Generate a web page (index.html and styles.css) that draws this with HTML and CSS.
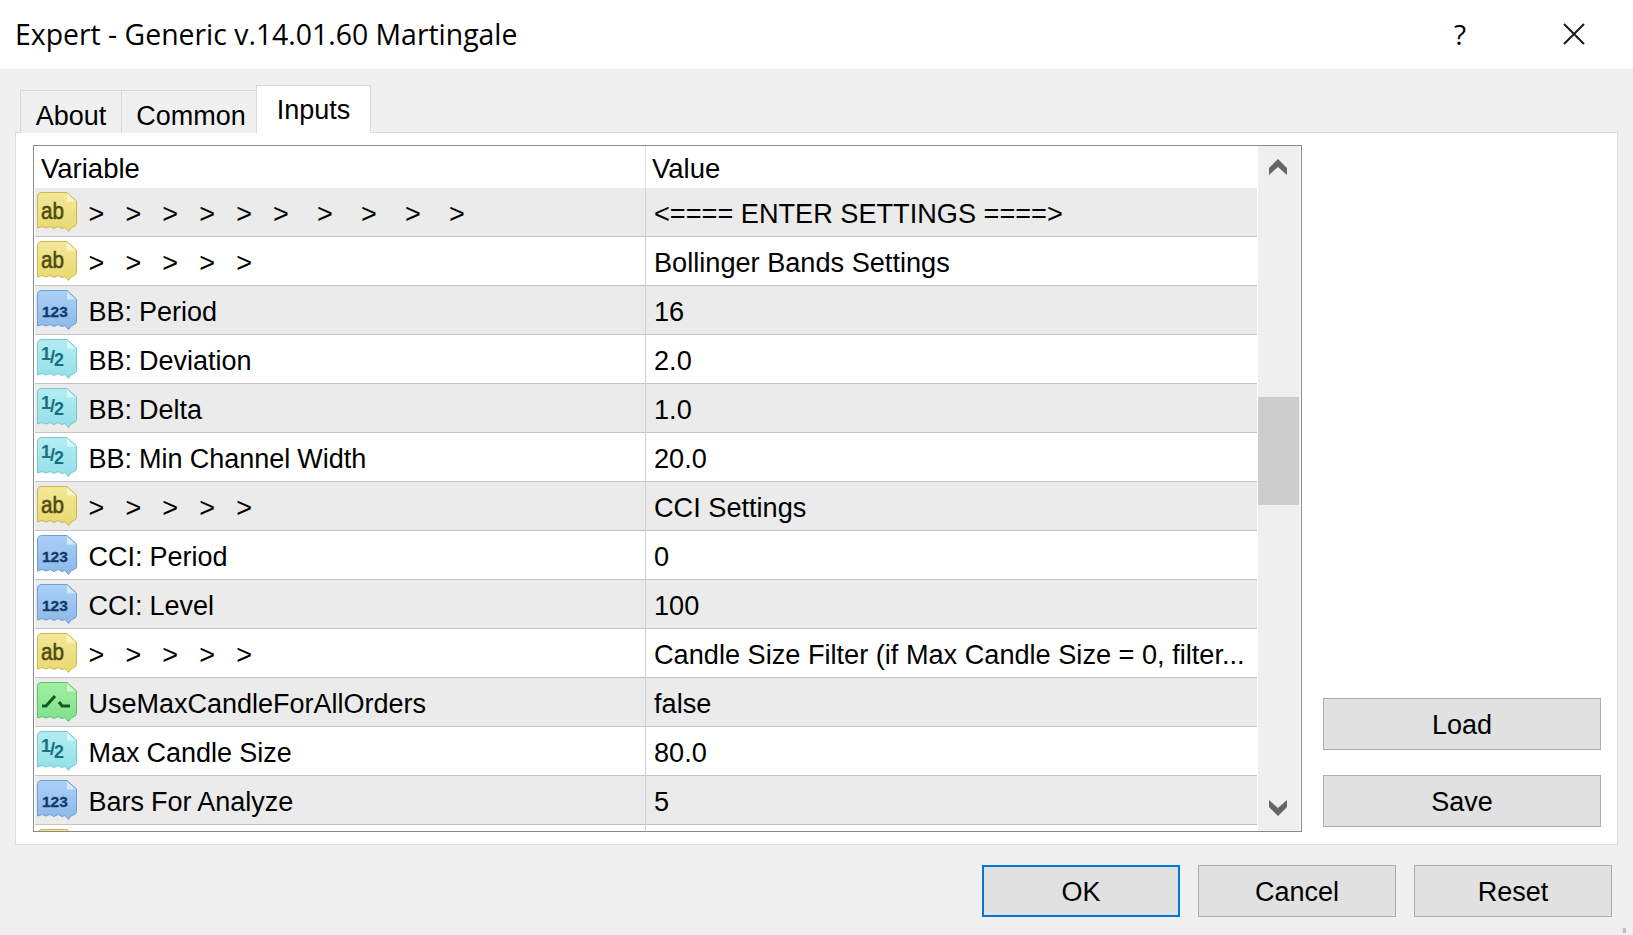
FILE: index.html
```html
<!DOCTYPE html>
<html lang="en">
<head>
	<meta charset="UTF-8">
	<title>Expert - Generic v.14.01.60 Martingale</title>
	<link rel="stylesheet" href="styles.css">
</head>
<body>
	<svg class="defs" width="0" height="0">
		<defs>
			<path id="paper" d="M5 .5H30L39.500 9V31.500Q39.500 33 38 34L34 36L31.500 39.500L28 35.500L25 36.500L21 34.500L17 36.500L13 34.500L9 36L5 34.500L.5 36V5Q.5 .5 5 .5Z"/>
			<path id="fold" d="M30 1.500L38.500 9.500H30Z"/>
			<linearGradient id="g_ab" x1="0" y1="0" x2="0" y2="1"><stop offset="0" stop-color="#f3e899"/><stop offset="1" stop-color="#e8d96f"/></linearGradient>
			<linearGradient id="g_num" x1="0" y1="0" x2="0" y2="1"><stop offset="0" stop-color="#a9d0f6"/><stop offset="1" stop-color="#8db8e8"/></linearGradient>
			<linearGradient id="g_dbl" x1="0" y1="0" x2="0" y2="1"><stop offset="0" stop-color="#b4edf3"/><stop offset="1" stop-color="#93dfe8"/></linearGradient>
			<linearGradient id="g_bool" x1="0" y1="0" x2="0" y2="1"><stop offset="0" stop-color="#a0f0a0"/><stop offset="1" stop-color="#7fe08a"/></linearGradient>
		</defs>
	</svg>

	<div class="dlg">
		<div class="title_bar">
			<span class="title">Expert - Generic v.14.01.60 Martingale</span>
			<span class="help">?</span>
			<svg class="close" width="22" height="22" viewBox="0 0 22 22"><path d="M1 1L21 21M21 1L1 21"/></svg>
		</div>

		<div class="tabs">
			<div class="tab tab_about">About</div>
			<div class="tab tab_common">Common</div>
			<div class="tab tab_on">Inputs</div>
		</div>

		<div class="panel">
			<div class="grid_box">
				<div class="grid_main">
					<div class="head">
						<div class="col_var">Variable</div>
						<div class="col_val">Value</div>
					</div>
					<div class="row odd">
						<div class="col_var"><svg class="ico ab" viewBox="0 0 40 40"><use href="#paper"/><use class="fold" href="#fold"/><text x="4" y="27" textLength="23" lengthAdjust="spacingAndGlyphs">ab</text></svg><span>&gt;   &gt;   &gt;   &gt;   &gt;   &gt;    &gt;    &gt;    &gt;    &gt;</span></div>
						<div class="col_val">&lt;==== ENTER SETTINGS ====&gt;</div>
					</div>
					<div class="row">
						<div class="col_var"><svg class="ico ab" viewBox="0 0 40 40"><use href="#paper"/><use class="fold" href="#fold"/><text x="4" y="27" textLength="23" lengthAdjust="spacingAndGlyphs">ab</text></svg><span>&gt;   &gt;   &gt;   &gt;   &gt;</span></div>
						<div class="col_val">Bollinger Bands Settings</div>
					</div>
					<div class="row odd">
						<div class="col_var"><svg class="ico num" viewBox="0 0 40 40"><use href="#paper"/><use class="fold" href="#fold"/><text x="5" y="26.500">123</text></svg><span>BB: Period</span></div>
						<div class="col_val">16</div>
					</div>
					<div class="row">
						<div class="col_var"><svg class="ico dbl" viewBox="0 0 40 40"><use href="#paper"/><use class="fold" href="#fold"/><text x="4" y="21">1<tspan y="24">/</tspan><tspan y="27">2</tspan></text></svg><span>BB: Deviation</span></div>
						<div class="col_val">2.0</div>
					</div>
					<div class="row odd">
						<div class="col_var"><svg class="ico dbl" viewBox="0 0 40 40"><use href="#paper"/><use class="fold" href="#fold"/><text x="4" y="21">1<tspan y="24">/</tspan><tspan y="27">2</tspan></text></svg><span>BB: Delta</span></div>
						<div class="col_val">1.0</div>
					</div>
					<div class="row">
						<div class="col_var"><svg class="ico dbl" viewBox="0 0 40 40"><use href="#paper"/><use class="fold" href="#fold"/><text x="4" y="21">1<tspan y="24">/</tspan><tspan y="27">2</tspan></text></svg><span>BB: Min Channel Width</span></div>
						<div class="col_val">20.0</div>
					</div>
					<div class="row odd">
						<div class="col_var"><svg class="ico ab" viewBox="0 0 40 40"><use href="#paper"/><use class="fold" href="#fold"/><text x="4" y="27" textLength="23" lengthAdjust="spacingAndGlyphs">ab</text></svg><span>&gt;   &gt;   &gt;   &gt;   &gt;</span></div>
						<div class="col_val">CCI Settings</div>
					</div>
					<div class="row">
						<div class="col_var"><svg class="ico num" viewBox="0 0 40 40"><use href="#paper"/><use class="fold" href="#fold"/><text x="5" y="26.500">123</text></svg><span>CCI: Period</span></div>
						<div class="col_val">0</div>
					</div>
					<div class="row odd">
						<div class="col_var"><svg class="ico num" viewBox="0 0 40 40"><use href="#paper"/><use class="fold" href="#fold"/><text x="5" y="26.500">123</text></svg><span>CCI: Level</span></div>
						<div class="col_val">100</div>
					</div>
					<div class="row">
						<div class="col_var"><svg class="ico ab" viewBox="0 0 40 40"><use href="#paper"/><use class="fold" href="#fold"/><text x="4" y="27" textLength="23" lengthAdjust="spacingAndGlyphs">ab</text></svg><span>&gt;   &gt;   &gt;   &gt;   &gt;</span></div>
						<div class="col_val">Candle Size Filter (if Max Candle Size = 0, filter...</div>
					</div>
					<div class="row odd">
						<div class="col_var"><svg class="ico bool" viewBox="0 0 40 40"><use href="#paper"/><use class="fold" href="#fold"/><path class="sw" d="M5 24H9L18 14M22 20L25 24H33"/></svg><span>UseMaxCandleForAllOrders</span></div>
						<div class="col_val">false</div>
					</div>
					<div class="row">
						<div class="col_var"><svg class="ico dbl" viewBox="0 0 40 40"><use href="#paper"/><use class="fold" href="#fold"/><text x="4" y="21">1<tspan y="24">/</tspan><tspan y="27">2</tspan></text></svg><span>Max Candle Size</span></div>
						<div class="col_val">80.0</div>
					</div>
					<div class="row odd">
						<div class="col_var"><svg class="ico num" viewBox="0 0 40 40"><use href="#paper"/><use class="fold" href="#fold"/><text x="5" y="26.500">123</text></svg><span>Bars For Analyze</span></div>
						<div class="col_val">5</div>
					</div>
					<div class="row">
						<div class="col_var"><svg class="ico ab" viewBox="0 0 40 40"><use href="#paper"/></svg></div>
						<div class="col_val"></div>
					</div>
				</div>
				<div class="scroll">
					<svg class="arrow" width="20" height="18" viewBox="0 0 20 18"><path d="M10 1L19 10V17L10 9L1 17V10Z"/></svg>
					<div class="thumb"></div>
					<svg class="arrow" width="20" height="18" viewBox="0 0 20 18"><path d="M10 17L19 8V1L10 9L1 1V8Z"/></svg>
				</div>
			</div>
			<div class="side">
				<div class="btn">Load</div>
				<div class="btn">Save</div>
			</div>
		</div>

		<div class="foot">
			<div class="btn btn_def">OK</div>
			<div class="btn">Cancel</div>
			<div class="btn">Reset</div>
		</div>
		<div class="grip"></div>
	</div>
</body>
</html>
```

FILE: styles.css
```css
/* reset */
html,body{margin:0;padding:0;}
body{width:1633px;height:935px;overflow:hidden;background:#f0f0f0;font-family:"Liberation Sans",Arial,sans-serif;font-size:27px;color:#000;}
.defs{position:absolute;}

.dlg{
	position: relative;
	height: 935px;
}

/* title */
.title_bar{
	display: flex;
	align-items: center;
	height: 69px;
	padding: 0 48px 0 15px;
	background: #fff;
}
.title{
	flex: 1;
	margin-bottom: 1px;
	font-family: "Open Sans","Noto Sans",sans-serif;
	font-size: 28.4px;
}
.help{
	margin: 0 97px 2px 0;
	font-family: "Open Sans","Noto Sans",sans-serif;
	font-size: 28px;
}
.close{
	margin-bottom: 2px;
}
.close path{
	fill: none;
	stroke: #1a1a1a;
	stroke-width: 2;
}

/* tabs */
.tabs{
	display: flex;
	align-items: flex-end;
	height: 64px;
	margin-bottom: -1px;
	padding-left: 20px;
	position: relative;
	z-index: 1;
}
.tab{
	box-sizing: border-box;
	height: 43px;
	padding-top: 7px;
	border: 1px solid #d9d9d9;
	border-bottom: 0;
	line-height: 36px;
	text-align: center;
	background: #f0f0f0;
}
.tab_about{width:101px;border-right:0;}
.tab_common{width:135px;padding-left:4px;border-right:0;}
.tab_on{
	width: 115px;
	height: 48px;
	padding-top: 6px;
	background: #fff;
}

/* panel */
.panel{
	box-sizing: border-box;
	display: flex;
	width: 1603px;
	height: 713px;
	margin-left: 15px;
	padding: 12px 16px 12px 17px;
	border: 1px solid #dcdcdc;
	background: #fff;
}
.grid_box{
	box-sizing: border-box;
	display: flex;
	width: 1269px;
	border: 1px solid #8a8a8a;
	padding: 0 1px 0 1px;
}
.grid_main{
	width: 1223px;
	overflow: hidden;
}
.head{
	display: grid;
	grid-template-columns: 611px 1fr;
	height: 42px;
	font-size: 27.5px;
	line-height: 46px;
}
.head .col_var{padding-left:6px;border-right:1px solid #e4e4e4;}
.head .col_val{padding-left:6px;}
.row{
	box-sizing: border-box;
	display: grid;
	grid-template-columns: 611px 1fr;
	height: 49px;
	border-bottom: 1px solid #c4c4c4;
	line-height: 52px;
}
.row.odd{background:#ebebeb;}
.row .col_var{
	display: flex;
	align-items: flex-start;
	border-right: 1px solid #d0d0d0;
	white-space: pre;
	word-spacing: -.45px;
}
.row .col_val{padding-left:8px;font-size:27.15px;white-space:nowrap;}
.ico{
	flex: none;
	width: 40px;
	height: 40px;
	margin: 4px 11.5px 0 2px;
}

.ico use{stroke-width:1;}
.ico .fold{fill:#fff;fill-opacity:.55;stroke:none;}
.ico text{font-family:"Liberation Sans",sans-serif;}
.ab use{fill:url(#g_ab);stroke:#cbb94f;}
.ab text{font-size:24px;fill:#4f4a10;stroke:#4f4a10;stroke-width:.6;}
.num use{fill:url(#g_num);stroke:#6f9ed4;}
.num text{font-size:15.500px;font-weight:bold;fill:#16396b;stroke:#16396b;stroke-width:.3;}
.dbl use{fill:url(#g_dbl);stroke:#74c9d4;}
.dbl text{font-size:18px;font-weight:bold;letter-spacing:-1px;fill:#17707c;}
.bool use{fill:url(#g_bool);stroke:#5cc46a;}
.sw{fill:none;stroke:#14591f;stroke-width:3;}

/* scrollbar */
.scroll{
	box-sizing: border-box;
	display: flex;
	flex-direction: column;
	align-items: center;
	width: 42px;
	margin-left: 1px;
	padding: 12px 2px 14px 0;
	background: #efefef;
	position: relative;
}
.scroll .arrow{fill:#666;}
.scroll .arrow:last-child{margin-top:auto;}
.thumb{
	position: absolute;
	left: 0;
	right: 1px;
	top: 251px;
	height: 108px;
	background: #cdcdcd;
}

/* buttons */
.side{
	display: flex;
	flex-direction: column;
	justify-content: flex-end;
	gap: 25px;
	width: 278px;
	margin-left: 21px;
	padding-bottom: 5px;
}
.btn{
	box-sizing: border-box;
	width: 278px;
	height: 52px;
	border: 1px solid #adadad;
	background: #e1e1e1;
	line-height: 52px;
	text-align: center;
}
.foot{
	display: flex;
	justify-content: flex-end;
	gap: 18px;
	padding: 20px 21px 0 0;
}
.foot .btn{width:198px;}
.foot .btn_def{border:2px solid #0078d7;line-height:50px;}

.grip{
	position: absolute;
	left: 1623px;
	top: 928px;
	width: 3px;
	height: 5px;
	background: #bdbdbd;
}
```
